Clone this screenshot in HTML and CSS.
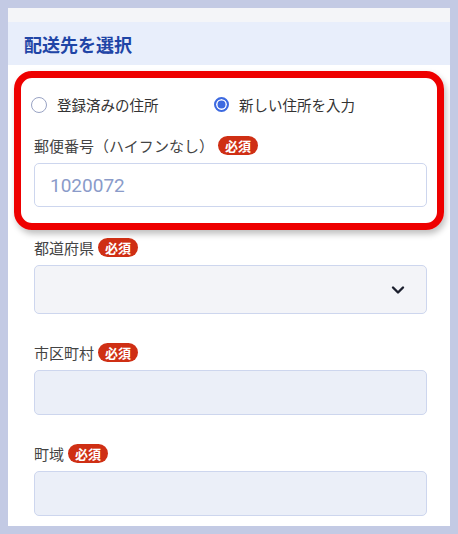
FILE: index.html
```html
<!DOCTYPE html>
<html lang="ja">
<head>
  <meta charset="UTF-8" />
  <meta name="viewport" content="width=device-width, initial-scale=1.0" />
  <title>配送先を選択</title>
  <link rel="stylesheet" href="styles.css">
</head>
<body>
  <div class="card">
    <div class="top-strip"></div>
    <div class="card-header">配送先を選択</div>

    <!-- highlighted area -->
    <div class="highlight">
      <div class="radio-row">
        <label class="radio">
          <span class="radio-dot"></span>
          登録済みの住所
        </label>
        <label class="radio">
          <span class="radio-dot checked"></span>
          新しい住所を入力
        </label>
      </div>
      <div class="field">
        <div class="field-label">郵便番号（ハイフンなし）<span class="badge">必須</span></div>
        <div class="input white"><span class="placeholder">1020072</span></div>
      </div>
    </div>

    <div class="fields">
      <div class="field">
        <div class="field-label">都道府県<span class="badge">必須</span></div>
        <div class="input select">
          <svg width="14" height="10" viewBox="0 0 14 10"><path d="M2 2.5 L7 7.5 L12 2.5" fill="none" stroke="#1b1f2e" stroke-width="2.4" stroke-linecap="round" stroke-linejoin="round"/></svg>
        </div>
      </div>
      <div class="field">
        <div class="field-label">市区町村<span class="badge">必須</span></div>
        <div class="input"></div>
      </div>
      <div class="field">
        <div class="field-label">町域<span class="badge">必須</span></div>
        <div class="input"></div>
      </div>
    </div>
  </div>
</body>
</html>
```

FILE: styles.css
```css
body {
  margin: 0;
  background-color: #c3cae4;
  font-family: "Noto Sans CJK JP", "Noto Sans", sans-serif;
}
.card {
  margin: 8px 8px 0;
  height: 518px;
  background-color: #fff;
  overflow: hidden;
}
.top-strip {
  height: 14px;
  background-color: #f4f5f8;
}
.card-header {
  height: 43px;
  box-sizing: border-box;
  padding: 8px 16px 0;
  background-color: #e8eefb;
  color: #1f45a6;
  font-size: 18px;
  font-weight: bold;
  line-height: 28px;
}
.highlight {
  margin: 6px 6px 0;
  border: 7px solid #ee0000;
  border-radius: 18px;
  padding: 13px 10px 16px 13px;
  box-shadow: 2px 4px 6px rgba(0,0,0,0.25);
}
.radio-row {
  display: flex;
  height: 27px;
  align-items: center;
  margin-left: -3px;
}
.radio {
  display: flex;
  align-items: center;
  gap: 10px;
  width: 183px;
  font-size: 14.5px;
  color: #333;
}
.radio-dot {
  width: 14px;
  height: 14px;
  border: 1.5px solid #99a3c4;
  border-radius: 50%;
  box-sizing: content-box;
}
.radio-dot.checked {
  width: 11px;
  height: 11px;
  border: 2px solid #3d6ae0;
  background-color: #3d6ae0;
  box-shadow: inset 0 0 0 1.5px #fff;
}
.field {
  margin-top: 17px;
}
.field-label {
  display: flex;
  align-items: center;
  height: 20px;
  font-size: 15px;
  color: #444;
  margin-bottom: 8px;
}
.badge {
  display: inline-block;
  margin-left: 4px;
  padding: 0 7px;
  height: 19px;
  line-height: 19px;
  border-radius: 10px;
  background-color: #cf2f14;
  color: #fff;
  font-size: 13px;
  font-weight: bold;
}
.input {
  height: 45px;
  box-sizing: border-box;
  border: 1.5px solid #cdd6ee;
  border-radius: 5px;
  background-color: #ebeff8;
}
.input.white {
  height: 44px;
  background-color: #fff;
  padding: 0 15px;
  display: flex;
  align-items: center;
}
.placeholder {
  font-size: 19px;
  color: #8a9bc9;
  font-family: "Roboto", "Noto Sans", sans-serif;
}
.input.select {
  height: 49px;
  background-color: #f3f4f8;
  display: flex;
  align-items: center;
  justify-content: flex-end;
  padding-right: 21px;
}
.fields {
  padding: 0 23px 0 26px;
}
.fields .field {
  margin-top: 7px;
}
.fields .field + .field {
  margin-top: 28px;
}
```
